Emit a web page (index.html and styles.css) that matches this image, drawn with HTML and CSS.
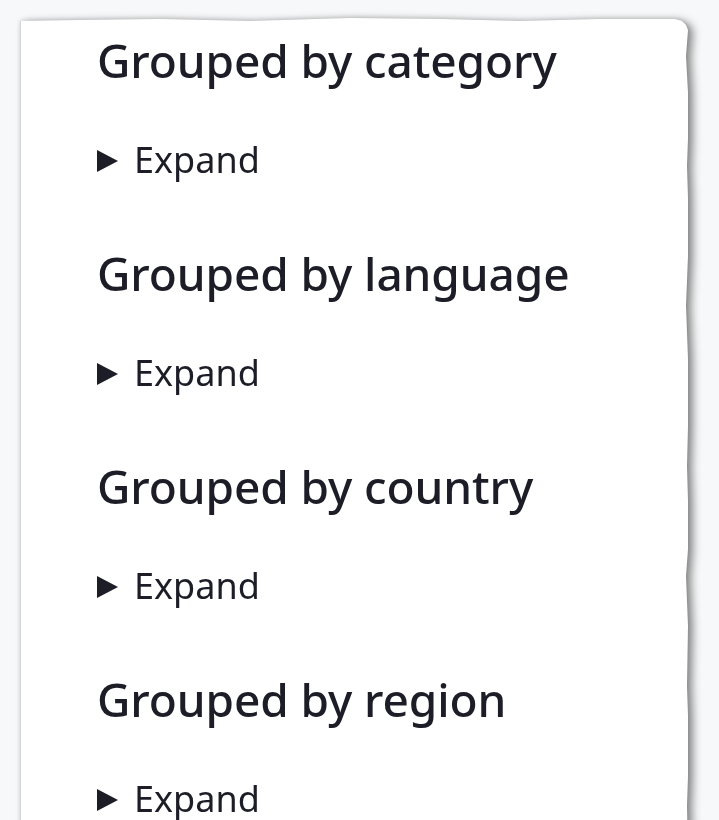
FILE: index.html
```html
<!DOCTYPE html>
<html lang="en">
<head>
<meta charset="utf-8">
<title>Grouped lists</title>
<link rel="stylesheet" href="styles.css">
</head>
<body>
<div class="page">
  <div class="sheet-shadow">
    <main class="sheet">
      <section class="group">
        <h2 class="group-title">Grouped by category</h2>
        <details class="toggle"><summary class="toggle-summary">Expand</summary></details>
      </section>
      <section class="group">
        <h2 class="group-title">Grouped by language</h2>
        <details class="toggle"><summary class="toggle-summary">Expand</summary></details>
      </section>
      <section class="group">
        <h2 class="group-title">Grouped by country</h2>
        <details class="toggle"><summary class="toggle-summary">Expand</summary></details>
      </section>
      <section class="group">
        <h2 class="group-title">Grouped by region</h2>
        <details class="toggle"><summary class="toggle-summary">Expand</summary></details>
      </section>
    </main>
  </div>
</div>
</body>
</html>
```
FILE: styles.css
```css
html, body {
  margin: 0;
  padding: 0;
  background: #f7f8f9;
}

body {
  font-family: "Noto Sans", "Open Sans", sans-serif;
  color: #1c1d26;
  overflow: hidden;
  height: 820px;
}

.page {
  padding: 16px 0 0 20px;
}

.sheet-shadow {
  width: 674px;
  filter: drop-shadow(0 -1px 2px rgba(0, 0, 0, 0.10)) drop-shadow(5px 2px 4px rgba(0, 0, 0, 0.45));
}

.sheet {
  width: 668px;
  height: 840px;
  background: #ffffff;
  border-left: 1px solid #d6d8db;
  padding: 16px 0 0 76px;
  box-sizing: border-box;
  display: flex;
  flex-direction: column;
  clip-path: polygon(
    0 5px, 60px 4px, 140px 3px, 230px 5px, 330px 2px, 420px 3px, 500px 5px,
    580px 3px, 655px 3px, 662px 5px, 666px 9px,
    668px 14px, 666px 40px, 669px 95px, 667px 150px, 669px 215px,
    666px 290px, 669px 370px, 667px 450px, 669px 520px, 666px 560px,
    668px 610px, 667px 670px, 669px 730px, 667px 790px, 668px 840px,
    0 840px
  );
}

.group {
  display: flex;
  flex-direction: column;
  height: 213px;
  flex-shrink: 0;
}

.group-title {
  margin: 0;
  font-size: 46px;
  font-weight: 550;
  line-height: 56px;
  letter-spacing: -0.1px;
}

.toggle {
  margin-top: 50px;
}

.toggle-summary {
  list-style: none;
  display: flex;
  align-items: center;
  gap: 16px;
  font-size: 36px;
  line-height: 44px;
  font-weight: 400;
  cursor: pointer;
}

.toggle-summary::-webkit-details-marker {
  display: none;
}

.toggle-summary::before {
  content: "";
  width: 0;
  height: 0;
  border-top: 11px solid transparent;
  border-bottom: 11px solid transparent;
  border-left: 21px solid #1c1d26;
  margin-top: 2px;
}
```
